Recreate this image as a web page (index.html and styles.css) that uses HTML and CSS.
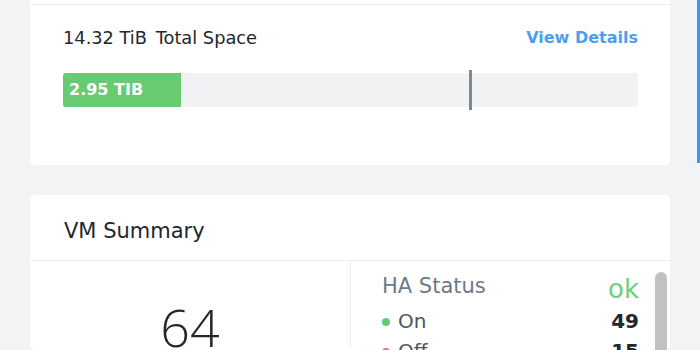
FILE: index.html
```html
<!DOCTYPE html>
<html lang="en">
<head>
  <meta charset="UTF-8">
  <title>Cluster Overview</title>
  <link rel="stylesheet" href="styles.css">
</head>
<body>
  <div class="layout">
    <div class="main">
      <!-- Storage card (header is scrolled off the top) -->
      <div class="card storage-card">
        <div class="cut-top"></div>
        <div class="storage-body">
          <div class="storage-row">
            <div class="total"><span class="total-num">14.32 TiB</span> Total Space</div>
            <a class="link" href="#">View Details</a>
          </div>
          <div class="bar">
            <div class="bar-fill" style="width: 118px;">2.95 TiB</div>
            <div class="bar-marker" style="left: 406px;"></div>
          </div>
        </div>
      </div>

      <!-- VM Summary card -->
      <div class="card vm-card">
        <div class="card-header">VM Summary</div>
        <div class="vm-body">
          <div class="vm-count">64</div>
          <div class="vm-status">
            <div class="status-list">
              <div class="status-head">
                <span class="status-title">HA Status</span>
                <span class="status-ok">ok</span>
              </div>
              <div class="status-row">
                <span class="label"><i class="dot on"></i>On</span>
                <span class="value">49</span>
              </div>
              <div class="status-row">
                <span class="label"><i class="dot off"></i>Off</span>
                <span class="value">15</span>
              </div>
            </div>
            <div class="scrollbar"><div class="thumb"></div></div>
          </div>
        </div>
      </div>
    </div>
    <div class="side"></div>
  </div>
</body>
</html>
```

FILE: styles.css
```css
/* Page */
body {
  margin: 0;
  background-color: #f2f3f5;
  font-family: "DejaVu Sans", Arial, sans-serif;
  color: #22272e;
  height: 350px;
  overflow: hidden;
}
.layout {
  display: flex;
  align-items: flex-start;
}
.main {
  width: 640px;
  padding-left: 30px;
}
/* Blue edge of the next panel on the right */
.side {
  margin-left: 27px;
  width: 0;
  height: 163px;
  border-left: 3px solid #3d96f0;
}
/* Cards */
.card {
  background: #fff;
  border-radius: 0 0 5px 5px;
}
.cut-top {
  height: 4px;
}
.storage-body {
  border-top: 1px solid #eceef1;
  padding: 19px 32px 0 33px;
  height: 141px;
}
.storage-row {
  display: flex;
  justify-content: space-between;
  align-items: center;
  height: 26px;
}
.total {
  font-size: 17.8px;
  color: #22272e;
}
.total-num {
  margin-right: 3px;
}
.link {
  font-size: 16px;
  font-weight: 700;
  color: #4c9ff0;
  text-decoration: none;
}
.bar {
  position: relative;
  margin-top: 23px;
  height: 34px;
  background: #f1f2f4;
  border-radius: 3px;
}
.bar-fill {
  height: 34px;
  background: #68cb72;
  border-radius: 3px 0 0 3px;
  color: #fff;
  font-weight: 700;
  font-size: 16px;
  line-height: 34px;
  padding-left: 6px;
  box-sizing: border-box;
  text-transform: uppercase;
}
.bar-marker {
  position: absolute;
  top: -3px;
  width: 3px;
  height: 40px;
  background: #7b8a98;
}
.vm-card {
  margin-top: 30px;
  border-radius: 5px;
  height: 155px;
}
.card-header {
  height: 66px;
  box-sizing: border-box;
  padding: 24px 0 0 34px;
  font-size: 21px;
  line-height: 24px;
  border-bottom: 1px solid #eceef1;
}
.vm-body {
  display: flex;
}
.vm-count {
  width: 321px;
  border-right: 1px solid #eceef1;
  text-align: center;
  font-family: "Open Sans", sans-serif;
  font-size: 52px;
  font-weight: 300;
  line-height: 44px;
  padding-top: 44px;
  height: 88px;
  box-sizing: border-box;
}
.vm-status {
  flex: 1;
  display: flex;
  padding: 13px 3px 0 31px;
}
.status-list {
  flex: 1;
}
.status-head {
  display: flex;
  justify-content: space-between;
  align-items: flex-start;
  margin-bottom: 2px;
}
.status-title {
  font-size: 21px;
  color: #6b7a8a;
}
.status-ok {
  font-size: 26px;
  color: #6fcf7a;
  line-height: 30px;
}
.status-row {
  display: flex;
  justify-content: space-between;
  font-size: 20px;
  line-height: 30px;
}
.label {
  color: #4b5866;
}
.value {
  font-weight: 700;
  color: #22272e;
}
.dot {
  display: inline-block;
  width: 8px;
  height: 8px;
  border-radius: 50%;
  margin: 0 8px 1px 0;
  vertical-align: middle;
}
.dot.on {
  background: #68cb72;
}
.dot.off {
  background: #f0716c;
}
.scrollbar {
  width: 12px;
  margin: -2px 0 0 16px;
}
.thumb {
  height: 120px;
  background: #c1c1c1;
  border-radius: 6px;
}
```
